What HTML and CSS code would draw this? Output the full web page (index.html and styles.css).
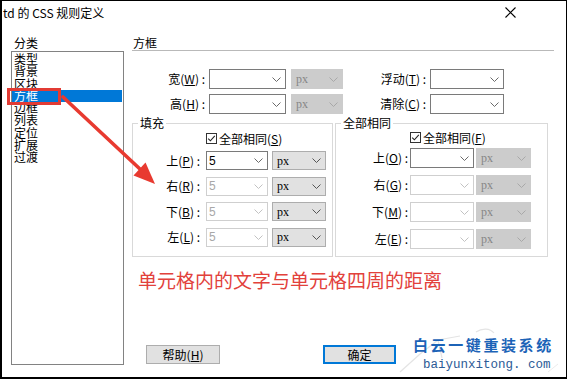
FILE: index.html
```html
<!DOCTYPE html>
<html lang="zh-CN">
<head>
<meta charset="utf-8">
<title>td 的 CSS 规则定义</title>
<link rel="stylesheet" href="styles.css">
</head>
<body>
<div class="screen">
  <div class="window">
    <div class="titlebar">
      <span class="title">td 的 CSS 规则定义</span>
      <svg class="close" width="11" height="11" viewBox="0 0 11 11"><path d="M0.5 0.5L10.5 10.5M10.5 0.5L0.5 10.5" stroke="#000" stroke-width="1.1" fill="none"/></svg>
    </div>
    <div class="main">
      <div class="cat">
        <div class="cat-label">分类</div>
        <ul class="list">
          <li>类型</li>
          <li>背景</li>
          <li>区块</li>
          <li class="on">方框</li>
          <li>边框</li>
          <li>列表</li>
          <li>定位</li>
          <li>扩展</li>
          <li>过渡</li>
        </ul>
      </div>
      <div class="panel">
        <div class="panel-title">方框</div>
        <div class="size-rows">
          <div class="row">
            <label class="lbl lbl-a">宽(<u>W</u>)&nbsp;:</label>
            <div class="sel w77"><span></span><svg class="chev" width="9" height="5" viewBox="0 0 9 5"><path d="M0.5 0.5L4.5 4.5L8.5 0.5"/></svg></div>
            <div class="sel unit dis w52 gap5"><span>px</span><svg class="chev" width="9" height="5" viewBox="0 0 9 5"><path d="M0.5 0.5L4.5 4.5L8.5 0.5"/></svg></div>
            <label class="lbl lbl-b">浮动(<u>T</u>)&nbsp;:</label>
            <div class="sel w74"><span></span><svg class="chev" width="9" height="5" viewBox="0 0 9 5"><path d="M0.5 0.5L4.5 4.5L8.5 0.5"/></svg></div>
          </div>
          <div class="row">
            <label class="lbl lbl-a">高(<u>H</u>)&nbsp;:</label>
            <div class="sel w77"><span></span><svg class="chev" width="9" height="5" viewBox="0 0 9 5"><path d="M0.5 0.5L4.5 4.5L8.5 0.5"/></svg></div>
            <div class="sel unit dis w52 gap5"><span>px</span><svg class="chev" width="9" height="5" viewBox="0 0 9 5"><path d="M0.5 0.5L4.5 4.5L8.5 0.5"/></svg></div>
            <label class="lbl lbl-b">清除(<u>C</u>)&nbsp;:</label>
            <div class="sel w74"><span></span><svg class="chev" width="9" height="5" viewBox="0 0 9 5"><path d="M0.5 0.5L4.5 4.5L8.5 0.5"/></svg></div>
          </div>
        </div>

        <div class="groups">
          <fieldset class="grp grp-pad">
            <legend>填充</legend>
            <div class="chk-row">
              <svg class="chk" width="11" height="11" viewBox="0 0 11 11"><rect x="0.5" y="0.5" width="10" height="10" fill="#fff" stroke="#333"/><path d="M2.2 5.6L4.4 7.8L8.8 2.9" stroke="#222" stroke-width="1.1" fill="none"/></svg>
              <span>全部相同(<u>S</u>)</span>
            </div>
            <div class="pad-rows">
              <div class="row">
                <label class="lbl lbl-c">上(<u>P</u>)&nbsp;:</label>
                <div class="sel w62"><span>5</span><svg class="chev" width="9" height="5" viewBox="0 0 9 5"><path d="M0.5 0.5L4.5 4.5L8.5 0.5"/></svg></div>
                <div class="sel unit w54 gap4"><span>px</span><svg class="chev" width="9" height="5" viewBox="0 0 9 5"><path d="M0.5 0.5L4.5 4.5L8.5 0.5"/></svg></div>
              </div>
              <div class="row">
                <label class="lbl lbl-c">右(<u>R</u>)&nbsp;:</label>
                <div class="sel dis w62"><span>5</span><svg class="chev" width="9" height="5" viewBox="0 0 9 5"><path d="M0.5 0.5L4.5 4.5L8.5 0.5"/></svg></div>
                <div class="sel unit w54 gap4"><span>px</span><svg class="chev" width="9" height="5" viewBox="0 0 9 5"><path d="M0.5 0.5L4.5 4.5L8.5 0.5"/></svg></div>
              </div>
              <div class="row">
                <label class="lbl lbl-c">下(<u>B</u>)&nbsp;:</label>
                <div class="sel dis w62"><span>5</span><svg class="chev" width="9" height="5" viewBox="0 0 9 5"><path d="M0.5 0.5L4.5 4.5L8.5 0.5"/></svg></div>
                <div class="sel unit w54 gap4"><span>px</span><svg class="chev" width="9" height="5" viewBox="0 0 9 5"><path d="M0.5 0.5L4.5 4.5L8.5 0.5"/></svg></div>
              </div>
              <div class="row">
                <label class="lbl lbl-c">左(<u>L</u>)&nbsp;:</label>
                <div class="sel dis w62"><span>5</span><svg class="chev" width="9" height="5" viewBox="0 0 9 5"><path d="M0.5 0.5L4.5 4.5L8.5 0.5"/></svg></div>
                <div class="sel unit w54 gap4"><span>px</span><svg class="chev" width="9" height="5" viewBox="0 0 9 5"><path d="M0.5 0.5L4.5 4.5L8.5 0.5"/></svg></div>
              </div>
            </div>
          </fieldset>

          <fieldset class="grp grp-mar">
            <legend>全部相同</legend>
            <div class="chk-row r">
              <svg class="chk" width="11" height="11" viewBox="0 0 11 11"><rect x="0.5" y="0.5" width="10" height="10" fill="#fff" stroke="#333"/><path d="M2.2 5.6L4.4 7.8L8.8 2.9" stroke="#222" stroke-width="1.1" fill="none"/></svg>
              <span>全部相同(<u>F</u>)</span>
            </div>
            <div class="mar-rows">
              <div class="row">
                <label class="lbl lbl-d">上(<u>O</u>)&nbsp;:</label>
                <div class="sel w64"><span></span><svg class="chev" width="9" height="5" viewBox="0 0 9 5"><path d="M0.5 0.5L4.5 4.5L8.5 0.5"/></svg></div>
                <div class="sel unit dis w55 gap2"><span>px</span><svg class="chev" width="9" height="5" viewBox="0 0 9 5"><path d="M0.5 0.5L4.5 4.5L8.5 0.5"/></svg></div>
              </div>
              <div class="row">
                <label class="lbl lbl-d">右(<u>G</u>)&nbsp;:</label>
                <div class="sel dis w64"><span></span><svg class="chev" width="9" height="5" viewBox="0 0 9 5"><path d="M0.5 0.5L4.5 4.5L8.5 0.5"/></svg></div>
                <div class="sel unit dis w55 gap2"><span>px</span><svg class="chev" width="9" height="5" viewBox="0 0 9 5"><path d="M0.5 0.5L4.5 4.5L8.5 0.5"/></svg></div>
              </div>
              <div class="row">
                <label class="lbl lbl-d">下(<u>M</u>)&nbsp;:</label>
                <div class="sel dis w64"><span></span><svg class="chev" width="9" height="5" viewBox="0 0 9 5"><path d="M0.5 0.5L4.5 4.5L8.5 0.5"/></svg></div>
                <div class="sel unit dis w55 gap2"><span>px</span><svg class="chev" width="9" height="5" viewBox="0 0 9 5"><path d="M0.5 0.5L4.5 4.5L8.5 0.5"/></svg></div>
              </div>
              <div class="row">
                <label class="lbl lbl-d">左(<u>E</u>)&nbsp;:</label>
                <div class="sel dis w64"><span></span><svg class="chev" width="9" height="5" viewBox="0 0 9 5"><path d="M0.5 0.5L4.5 4.5L8.5 0.5"/></svg></div>
                <div class="sel unit dis w55 gap2"><span>px</span><svg class="chev" width="9" height="5" viewBox="0 0 9 5"><path d="M0.5 0.5L4.5 4.5L8.5 0.5"/></svg></div>
              </div>
            </div>
          </fieldset>
        </div>

        <p class="note">单元格内的文字与单元格四周的距离</p>

        <div class="buttons">
          <button class="btn">帮助(<u>H</u>)</button>
          <button class="btn primary">确定</button>
        </div>
      </div>
    </div>
  </div>

  <div class="hl-box"></div>
  <svg class="arrow" width="567" height="379" viewBox="0 0 567 379">
    <line x1="63" y1="97" x2="141" y2="170" stroke="#e83a30" stroke-width="3.6" stroke-linecap="round"/>
    <polygon points="155,184 133.5,175.5 145.5,162.5" fill="#e83a30"/>
  </svg>

  <div class="watermark">
    <svg class="wm-art" width="166" height="48" viewBox="0 0 166 48">
      <path d="M2 44L22 26L40 12L62 8M40 12L44 30M78 4C84 0 92 0 96 5" stroke="#e4e4e4" stroke-width="1.2" fill="none"/>
      <path d="M150 44L160 36" stroke="#ececec" stroke-width="1" fill="none"/>
    </svg>
    <div class="wm-cn">白云一键重装系统</div>
    <div class="wm-en">baiyunxitong.&nbsp;com</div>
  </div>
</div>
</body>
</html>
```

FILE: styles.css
```css
body {
  margin: 0;
  background: #fff;
}

.screen {
  position: relative;
  width: 567px;
  height: 379px;
  overflow: hidden;
  font-family: "Noto Sans CJK SC", "Noto Sans", sans-serif;
  font-size: 12px;
  color: #000;
}

.window {
  box-sizing: border-box;
  width: 567px;
  height: 379px;
  border: 1px solid #000;
  border-left-width: 2px;
  border-bottom-width: 2px;
  background: #fff;
  display: flex;
  flex-direction: column;
}

.titlebar {
  height: 23px;
  flex: none;
  display: flex;
  align-items: center;
  justify-content: space-between;
  padding: 0 50px 0 1px;
  line-height: 14px;
}

.title {
  font-size: 12px;
  white-space: nowrap;
}

.main {
  display: flex;
  flex: 1;
  min-height: 0;
}

/* category list */
.cat {
  margin-left: 9px;
  width: 113px;
  flex: none;
}

.cat-label {
  padding: 12px 0 0 3px;
  line-height: 14px;
  height: 15px;
}

.list {
  list-style: none;
  margin: 0;
  padding: 1px 0 0 0;
  box-sizing: border-box;
  height: 314px;
  border: 1px solid #828282;
}

.list li {
  height: 12.25px;
  line-height: 12.25px;
  padding-left: 2px;
  margin-right: 1px;
  white-space: nowrap;
}

.list li.on {
  background: #0078d7;
  color: #fff;
}

/* right panel */
.panel {
  margin-left: 7px;
  width: 425px;
  flex: none;
  display: flex;
  flex-direction: column;
}

.panel-title {
  margin: 0 2px 0 1px;
  padding: 12px 0 0 1px;
  line-height: 14px;
  border-bottom: 1px solid #b9b9b9;
}

.size-rows {
  margin-top: 18px;
  display: flex;
  flex-direction: column;
  gap: 5px;
}

.row {
  display: flex;
  align-items: center;
  height: 20px;
}

.lbl {
  flex: none;
  text-align: right;
  white-space: nowrap;
  line-height: 14px;
}

.lbl-a { width: 74px; margin-right: 4px; }
.lbl-b { width: 83px; margin-right: 4px; }
.lbl-c { width: 67px; margin-right: 6px; }
.lbl-d { width: 72px; margin-right: 2px; }

.sel {
  box-sizing: border-box;
  height: 100%;
  flex: none;
  display: flex;
  align-items: center;
  justify-content: space-between;
  border: 1px solid #7a7a7a;
  background: #fff;
  padding: 0 4px 0 2px;
  font-family: "Liberation Sans", Arial, sans-serif;
  font-size: 12px;
  line-height: 14px;
  color: #000;
}

.sel .chev path {
  stroke: #6a6a6a;
  stroke-width: 1;
  fill: none;
}

.sel.dis {
  border-color: #cfcfcf;
  color: #a8a8a8;
}

.sel.dis .chev path {
  stroke: #c2c2c2;
}

.sel.unit {
  background: #e1e1e1;
  border-color: #adadad;
  padding-left: 4px;
  font-family: "Liberation Serif", "Times New Roman", serif;
  color: #000;
}

.sel.unit .chev path {
  stroke: #555;
}

.sel.unit.dis {
  background: #cccccc;
  border-color: #cccccc;
  color: #868686;
}

.sel.unit.dis .chev path {
  stroke: #a8a8a8;
}

.w52 { width: 52px; }
.w54 { width: 54px; }
.w55 { width: 55px; }
.w62 { width: 62px; }
.w64 { width: 64px; }
.w74 { width: 74px; }
.w77 { width: 77px; }

.gap2 { margin-left: 2px; }
.gap4 { margin-left: 4px; }
.gap5 { margin-left: 5px; }

/* group boxes */
.groups {
  display: flex;
  margin-top: 2px;
}

.grp {
  box-sizing: border-box;
  margin: 0;
  padding: 0;
  height: 141px;
  min-width: 0;
  border: 1px solid #d9d9d9;
}

.grp-pad { margin-left: 1px; width: 201px; }
.grp-mar { margin-left: 2px; width: 213px; }

.grp legend {
  padding: 0 2px;
  margin-left: 5px;
  line-height: 14px;
}

.chk-row {
  display: flex;
  align-items: center;
  height: 13px;
  line-height: 13px;
  margin-top: 2px;
  padding-left: 73px;
  white-space: nowrap;
}

.chk-row.r {
  margin-top: 1px;
  padding-left: 74px;
}

.chk {
  flex: none;
  margin-right: 2px;
}

.pad-rows {
  display: flex;
  flex-direction: column;
  gap: 6.5px;
  margin-top: 6px;
}

.pad-rows .row { height: 19px; }

.mar-rows {
  display: flex;
  flex-direction: column;
  gap: 7px;
  margin-top: 4px;
}

.note {
  margin: 12px 0 0;
  padding-left: 7px;
  font-size: 19px;
  line-height: 22px;
  color: #e2413b;
  white-space: nowrap;
}

.buttons {
  display: flex;
  margin-top: 54px;
  padding-left: 15px;
}

.btn {
  box-sizing: border-box;
  height: 19px;
  width: 74px;
  padding: 0;
  background: #e1e1e1;
  border: 1px solid #adadad;
  font-family: "Noto Sans CJK SC", sans-serif;
  font-size: 12px;
  line-height: 15px;
  color: #000;
}

.btn.primary {
  width: 73px;
  margin-left: 103px;
  border: 2px solid #0078d7;
}

/* annotations laid over the dialog */
.hl-box {
  position: absolute;
  left: 7px;
  top: 88px;
  width: 54px;
  height: 17px;
  box-sizing: border-box;
  border: 3px solid #e23b34;
}

.arrow {
  position: absolute;
  left: 0;
  top: 0;
  pointer-events: none;
}

.watermark {
  position: absolute;
  left: 398px;
  top: 328px;
  width: 166px;
  height: 48px;
  background: #fff;
}

.wm-art {
  position: absolute;
  left: 0;
  top: 0;
}

.wm-cn {
  position: absolute;
  left: 15px;
  top: 8px;
  font-size: 15px;
  line-height: 18px;
  font-weight: bold;
  letter-spacing: 2.6px;
  color: #1c63b7;
  white-space: nowrap;
}

.wm-en {
  position: absolute;
  left: 25px;
  top: 29px;
  font-family: "Liberation Mono", "Courier New", monospace;
  font-size: 12.5px;
  line-height: 16px;
  color: #2c5b96;
  white-space: nowrap;
}
```
